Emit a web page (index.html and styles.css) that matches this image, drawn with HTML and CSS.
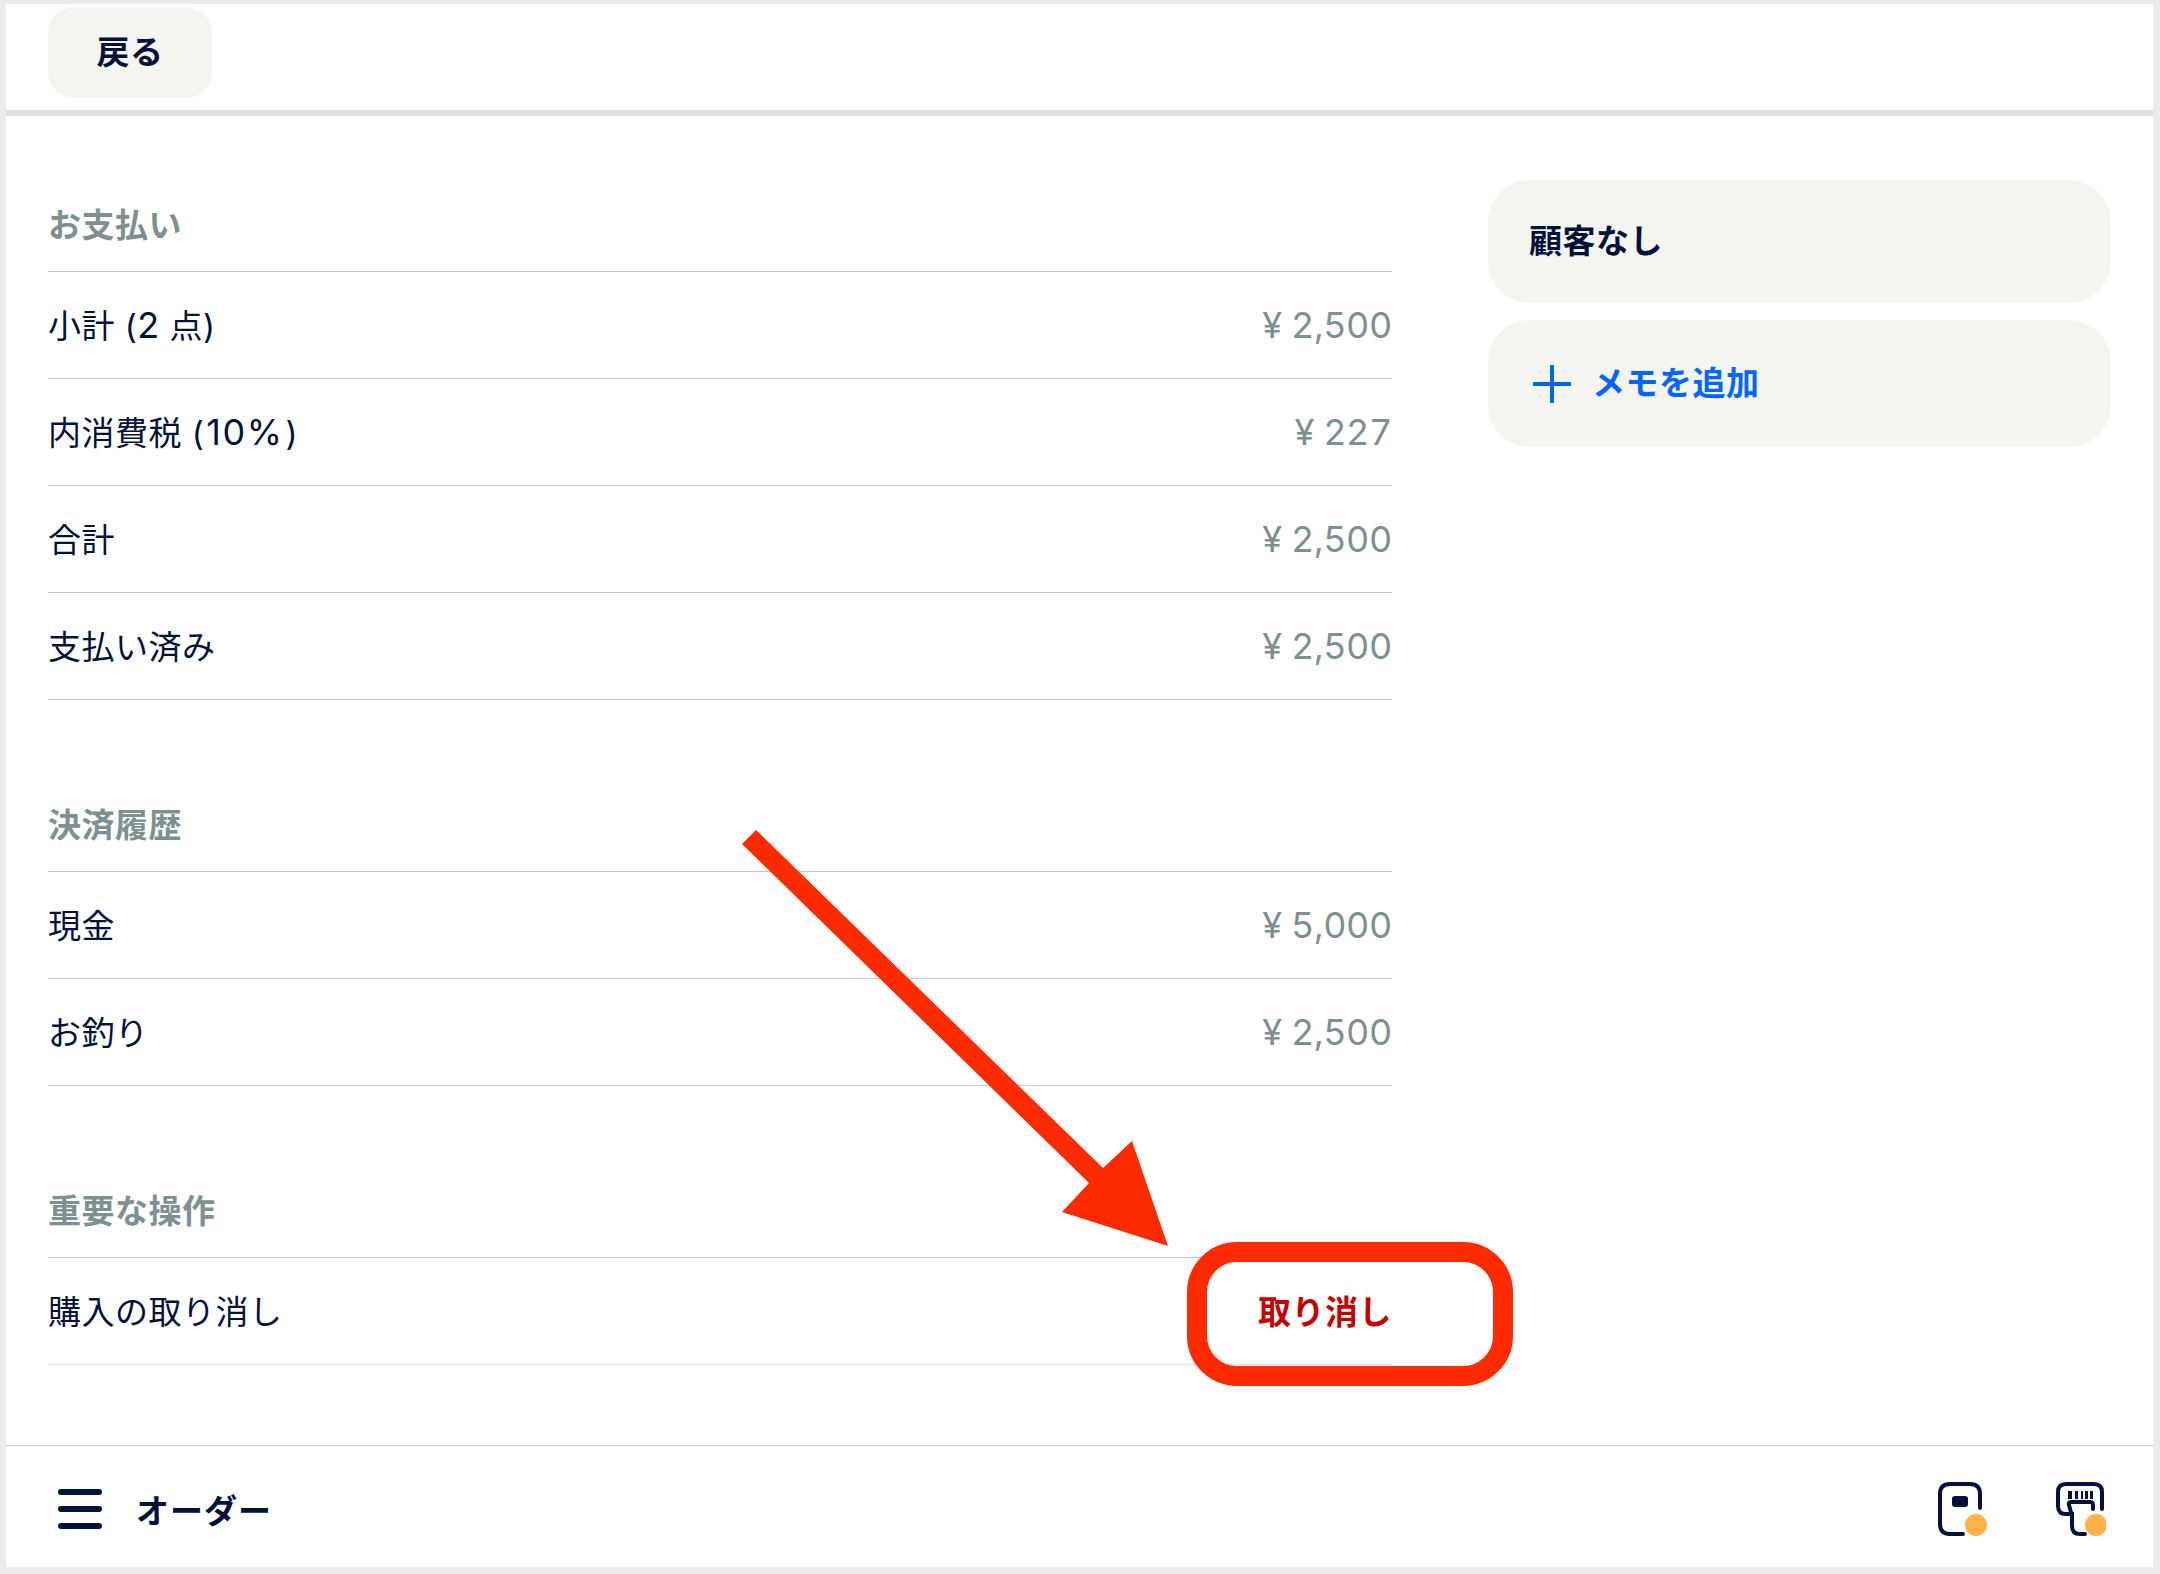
FILE: index.html
```html
<!DOCTYPE html>
<html lang="ja">
<head>
<meta charset="utf-8">
<title>お支払い</title>
<link rel="stylesheet" href="styles.css">
</head>
<body>
<div class="screen">
  <header class="topbar">
    <button class="back"><span class="lift">戻る</span></button>
  </header>
  <main class="content">
    <div class="details">
      <section class="section">
        <h2 class="section-title">お支払い</h2>
        <div class="row"><span class="label">小計 (<span class="num">2</span> 点)</span><span class="amount">¥ 2,500</span></div>
        <div class="row"><span class="label">内消費税 (<span class="num num-wide">10%</span>)</span><span class="amount">¥ 227</span></div>
        <div class="row"><span class="label">合計</span><span class="amount">¥ 2,500</span></div>
        <div class="row"><span class="label">支払い済み</span><span class="amount">¥ 2,500</span></div>
      </section>
      <section class="section">
        <h2 class="section-title">決済履歴</h2>
        <div class="row"><span class="label">現金</span><span class="amount">¥ 5,000</span></div>
        <div class="row"><span class="label">お釣り</span><span class="amount">¥ 2,500</span></div>
      </section>
      <section class="section">
        <h2 class="section-title">重要な操作</h2>
        <div class="row row-light"><span class="label">購入の取り消し</span><span class="danger">取り消し</span></div>
      </section>
    </div>
    <aside class="side">
      <div class="card card-customer"><span class="lift">顧客なし</span></div>
      <div class="card card-memo">
        <svg class="plus" viewBox="0 0 38 38" width="38" height="38"><path d="M19 1V37M1 19H37" fill="none" stroke="#0066ff" stroke-width="4" stroke-linecap="round"/></svg>
        <span class="lift">メモを追加</span>
      </div>
    </aside>
  </main>
  <footer class="footer">
    <div class="footer-left">
      <svg viewBox="0 0 44 40" width="44" height="40"><path d="M3 3H41M3 20H41M3 37H41" fill="none" stroke="#03123a" stroke-width="6" stroke-linecap="round"/></svg>
      <span class="footer-title">オーダー</span>
    </div>
    <div class="footer-right">
      <svg viewBox="0 0 50 54" width="50" height="54">
        <path d="M42 26V12Q42 2 32 2H12Q2 2 2 12V42Q2 52 12 52H25" fill="none" stroke="#03123a" stroke-width="4" stroke-linecap="round"/>
        <rect x="14" y="14" width="16" height="11" rx="3" fill="#03123a"/>
        <circle cx="38" cy="43" r="11" fill="#ffb347"/>
      </svg>
      <svg viewBox="0 0 50 54" width="50" height="54">
        <path d="M46 27V10Q46 2 38 2H10Q2 2 2 10V24Q2 32 10 32H16V44Q16 52 24 52H29" fill="none" stroke="#03123a" stroke-width="4" stroke-linecap="round"/>
        <path d="M37 27V23Q37 20 34 20H15Q12 20 13 23L16 34" fill="none" stroke="#03123a" stroke-width="4" stroke-linecap="round"/>
        <path d="M12 9h4v8h-4zM19 9h3v8h-3zM25 9h2v8h-2zM29 9h3v8h-3zM34 9h3v8h-3z" fill="#03123a"/>
        <circle cx="40" cy="43" r="11" fill="#ffb347"/>
      </svg>
    </div>
  </footer>
  <svg class="annotation" viewBox="0 0 2160 1574" width="2160" height="1574">
    <polygon points="742,844 756,830 1103,1168 1132,1141 1168,1246 1062,1212 1089,1183" fill="#ff2b00"/>
    <rect x="1197" y="1252" width="306" height="124" rx="40" fill="none" stroke="#ff2b00" stroke-width="20"/>
  </svg>
</div>
</body>
</html>
```

FILE: styles.css
```css
* { box-sizing: border-box; }
html, body { margin: 0; height: 100%; }
body {
  width: 2160px;
  height: 1574px;
  padding: 4px 7px 7px 6px;
  background: #ebebeb;
  font-family: "Inter", "Noto Sans CJK JP", sans-serif;
  font-size: 33px;
  letter-spacing: 0.5px;
  color: #03123a;
  overflow: hidden;
}
.screen {
  height: 100%;
  background: #fff;
  display: flex;
  flex-direction: column;
}
.topbar {
  height: 112px;
  padding: 3px 0 0 42px;
  border-bottom: 6px solid #dfe1db;
  flex: none;
}
.back {
  display: block;
  width: 164px;
  height: 91px;
  border: 0;
  border-radius: 26px;
  background: #f4f5f1;
  color: #03123a;
  font: 700 33px "Inter", "Noto Sans CJK JP", sans-serif;
  letter-spacing: 0.5px;
}
.lift { display: block; margin-bottom: 5px; }
.content {
  flex: 1;
  display: flex;
  justify-content: space-between;
  padding: 48px 42px 0;
}
.details { width: 1344px; }
.section + .section { margin-top: 64px; }
.section-title {
  height: 108px;
  margin: 0;
  padding-top: 43px;
  line-height: 36px;
  font-size: 33px;
  font-weight: 700;
  color: #7f9090;
  border-bottom: 1px solid #c6c6c6;
}
.row {
  height: 107px;
  display: flex;
  justify-content: space-between;
  align-items: center;
  border-bottom: 1px solid #c6c6c6;
}
.row-light { border-bottom-color: #e0e1db; }
.label { margin-bottom: 2px; }
.num { font-size: 36px; line-height: 1; }
.num-wide { letter-spacing: 1.5px; margin: 0 2px; }
.amount {
  color: #7f9090;
  font-size: 36px;
  font-weight: 400;
  letter-spacing: -0.4px;
  font-variant-numeric: tabular-nums;
}
.danger { color: #c40000; font-weight: 700; margin-bottom: 2px; }
.side {
  width: 623px;
  margin-top: 16px;
  display: flex;
  flex-direction: column;
  gap: 17px;
}
.card {
  background: #f4f5f1;
  border-radius: 42px;
  display: flex;
  align-items: center;
  padding-left: 41px;
  font-weight: 700;
}
.card-customer { height: 123px; }
.card-memo { height: 127px; gap: 21px; padding-left: 45px; color: #0066ff; }
.footer {
  height: 122px;
  flex: none;
  border-top: 1px solid #cbcbcb;
  display: flex;
  justify-content: space-between;
  align-items: center;
  padding: 5px 47px 0 52px;
}
.footer-left { display: flex; align-items: center; gap: 34px; }
.footer-title { font-weight: 700; letter-spacing: 1px; }
.footer-right { display: flex; align-items: center; gap: 68px; }
.footer-right svg { display: block; }
.annotation {
  position: absolute;
  left: 0;
  top: 0;
  pointer-events: none;
}
```
